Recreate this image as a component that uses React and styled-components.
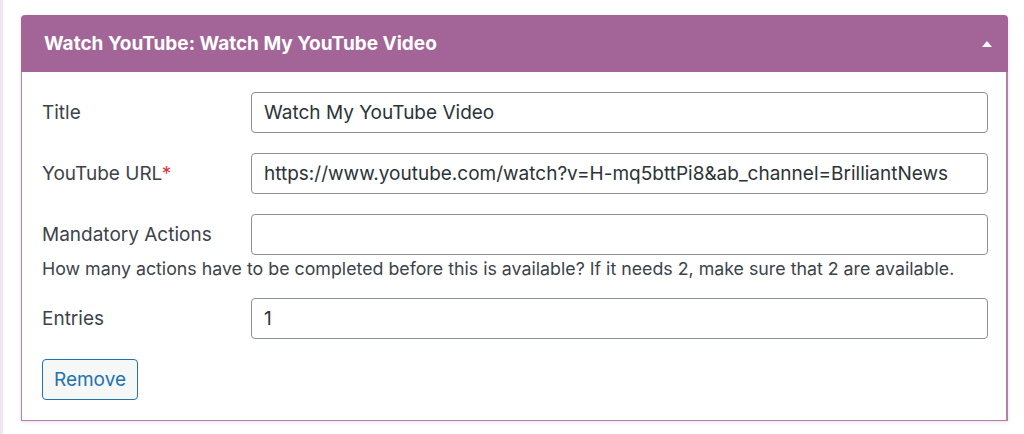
import React from 'react';
import styled, { createGlobalStyle } from 'styled-components';

const GlobalStyle = createGlobalStyle`
  html, body {
    margin: 0;
    padding: 0;
    background: #fff;
  }
  body {
    font-family: Inter, 'Liberation Sans', sans-serif;
    color: #3c434a;
  }
`;

const Page = styled.div`
  display: flex;
  min-height: 434px;
`;

const Strip = styled.div`
  width: 3px;
  background: #f1e5ef;
  flex-shrink: 0;
`;

const Wrap = styled.div`
  flex: 1;
  padding: 15px 16px 0 18px;
`;

const Panel = styled.section`
  background: #fff;
  border-radius: 4px 4px 0 0;
  box-shadow: 0 1px 4px rgba(0, 0, 0, 0.12);
`;

const Header = styled.header`
  display: flex;
  align-items: center;
  justify-content: space-between;
  height: 57px;
  padding: 0 16px 0 23px;
  background: #a36597;
  border-radius: 4px 4px 0 0;
  color: #fff;
  font-size: 19px;
  font-weight: 700;
`;

const Body = styled.div`
  border: 1px solid #b77ea9;
  border-top: none;
  border-right-width: 2px;
  padding: 20px 18px 20px 20px;
`;

const Row = styled.div`
  display: grid;
  grid-template-columns: 209px 1fr;
  align-items: center;
  margin-bottom: ${(p) => (p.$tight ? '2px' : '20px')};
`;

const Label = styled.label`
  font-size: 19px;
  color: #3c434a;
`;

const Req = styled.span`
  color: #d63638;
`;

const Input = styled.input`
  box-sizing: border-box;
  height: 41px;
  width: 100%;
  padding: 0 12px;
  border: 1px solid #8c8f94;
  border-radius: 4px;
  font-family: inherit;
  font-size: 19px;
  color: #2c3338;
  background: #fff;
  outline: none;
`;

const Help = styled.p`
  margin: 0 0 17px;
  font-size: 17.8px;
  line-height: 24px;
  color: #3c434a;
`;

const Button = styled.button`
  box-sizing: border-box;
  height: 41px;
  width: 96px;
  padding: 0;
  border: 1px solid #2271b1;
  border-radius: 4px;
  background: #f6f7f7;
  color: #2271b1;
  font-family: inherit;
  font-size: 19px;
  cursor: pointer;
`;

const Caret = () => (
  <svg width="10" height="6" viewBox="0 0 10 6">
    <path d="M0 6 L5 0 L10 6 Z" fill="#fff" />
  </svg>
);

export default function App() {
  return (
    <>
      <GlobalStyle />
      <Page>
        <Strip />
        <Wrap>
          <Panel>
            <Header>
              <span>Watch YouTube: Watch My YouTube Video</span>
              <Caret />
            </Header>
            <Body>
              <Row>
                <Label>Title</Label>
                <Input defaultValue="Watch My YouTube Video" />
              </Row>
              <Row>
                <Label>
                  YouTube URL<Req>*</Req>
                </Label>
                <Input defaultValue="https://www.youtube.com/watch?v=H-mq5bttPi8&ab_channel=BrilliantNews" />
              </Row>
              <Row $tight>
                <Label>Mandatory Actions</Label>
                <Input defaultValue="" />
              </Row>
              <Help>
                How many actions have to be completed before this is available? If it needs 2, make sure that 2 are available.
              </Help>
              <Row>
                <Label>Entries</Label>
                <Input defaultValue="1" />
              </Row>
              <Button>Remove</Button>
            </Body>
          </Panel>
        </Wrap>
      </Page>
    </>
  );
}
